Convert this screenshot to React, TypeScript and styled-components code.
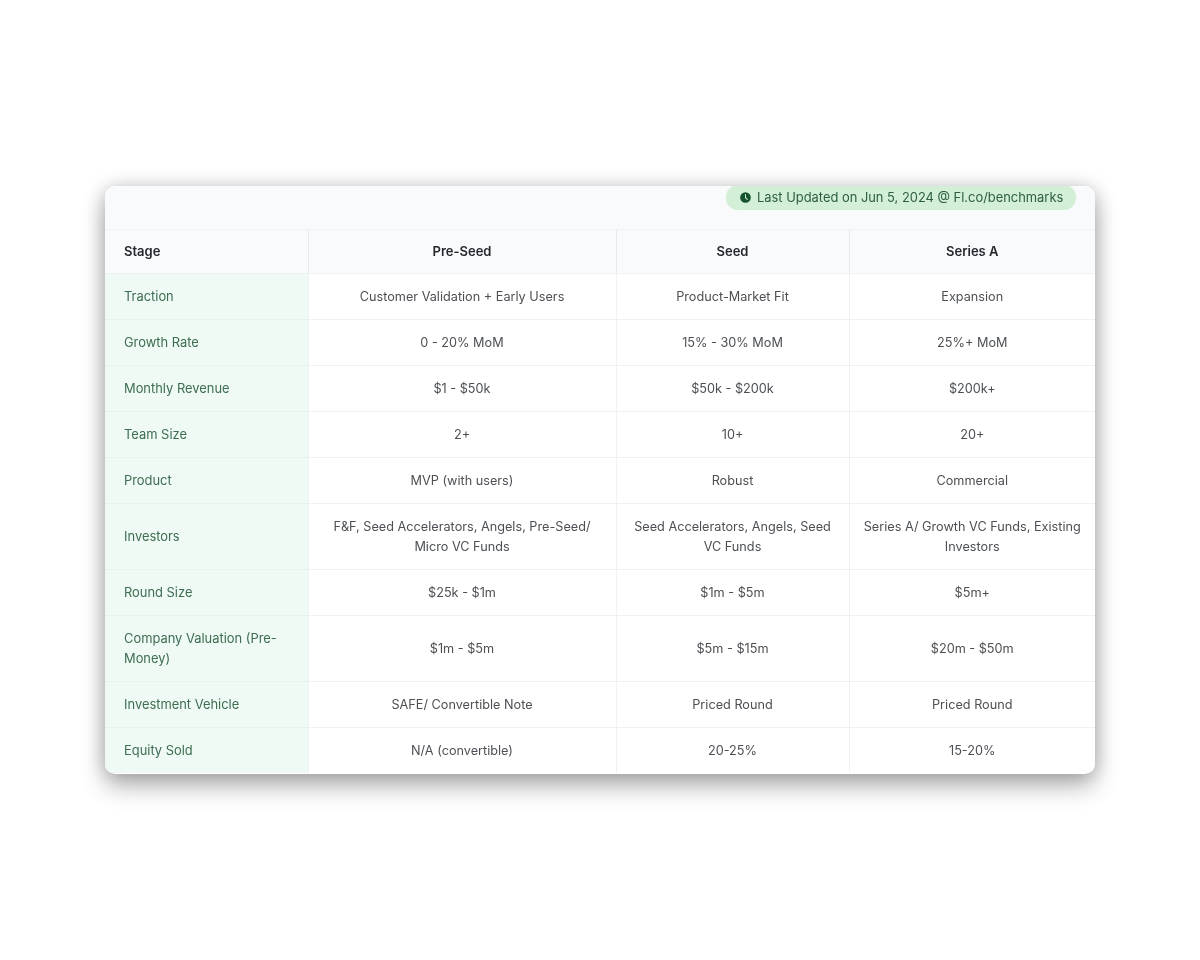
import styled, { createGlobalStyle } from "styled-components";

const GlobalStyle = createGlobalStyle`
  html, body {
    margin: 0;
    background: #ffffff;
    font-family: "Inter", "Liberation Sans", sans-serif;
  }
`;

const rows = [
  { label: "Traction", values: ["Customer Validation + Early Users", "Product-Market Fit", "Expansion"] },
  { label: "Growth Rate", values: ["0 - 20% MoM", "15% - 30% MoM", "25%+ MoM"] },
  { label: "Monthly Revenue", values: ["$1 - $50k", "$50k - $200k", "$200k+"] },
  { label: "Team Size", values: ["2+", "10+", "20+"] },
  { label: "Product", values: ["MVP (with users)", "Robust", "Commercial"] },
  {
    label: "Investors",
    tall: true,
    values: [
      "F&F, Seed Accelerators, Angels, Pre-Seed/ Micro VC Funds",
      "Seed Accelerators, Angels, Seed VC Funds",
      "Series A/ Growth VC Funds, Existing Investors",
    ],
  },
  { label: "Round Size", values: ["$25k - $1m", "$1m - $5m", "$5m+"] },
  { label: "Company Valuation (Pre-Money)", tall: true, values: ["$1m - $5m", "$5m - $15m", "$20m - $50m"] },
  { label: "Investment Vehicle", values: ["SAFE/ Convertible Note", "Priced Round", "Priced Round"] },
  { label: "Equity Sold", values: ["N/A (convertible)", "20-25%", "15-20%"] },
];

const App = () => {
  return (
    <Page>
      <GlobalStyle />
      <Card>
        <TopBand>
          <UpdatedBadge>
            <ClockIcon viewBox="0 0 12 12">
              <circle cx="6" cy="6" r="5.8" fill="#14532d" />
              <path d="M6 2.8v3.4l2 1.9" fill="none" stroke="#d3efd8" strokeWidth="1.1" strokeLinecap="round" />
            </ClockIcon>
            Last Updated on Jun 5, 2024 @ Fl.co/benchmarks
          </UpdatedBadge>
        </TopBand>
        <Table>
          <colgroup>
            <col style={{ width: 203 }} />
            <col style={{ width: 308 }} />
            <col style={{ width: 233 }} />
            <col />
          </colgroup>
          <thead>
            <tr>
              <HeadCell $first>Stage</HeadCell>
              <HeadCell>Pre-Seed</HeadCell>
              <HeadCell>Seed</HeadCell>
              <HeadCell>Series A</HeadCell>
            </tr>
          </thead>
          <tbody>
            {rows.map((row) => (
              <Row key={row.label} $tall={row.tall}>
                <LabelCell>{row.label}</LabelCell>
                {row.values.map((value, i) => (
                  <ValueCell key={i}>{value}</ValueCell>
                ))}
              </Row>
            ))}
          </tbody>
        </Table>
      </Card>
    </Page>
  );
};

const Page = styled.div`
  height: 960px;
  padding: 186px 105px 0;
  box-sizing: border-box;
  overflow: hidden;
`;

const Card = styled.div`
  width: 990px;
  height: 588px;
  background: #fff;
  border-radius: 10px;
  overflow: hidden;
  box-shadow: 0 12px 24px rgba(0, 0, 0, 0.3), 0 0 20px rgba(0, 0, 0, 0.18);
  filter: blur(0.5px);
`;

const TopBand = styled.div`
  height: 44px;
  box-sizing: border-box;
  background: #f8fafc;
  border-bottom: 1px solid #f0f2f4;
  display: flex;
  justify-content: flex-end;
  align-items: flex-start;
  padding-right: 19px;
`;

const UpdatedBadge = styled.div`
  height: 25px;
  width: 350px;
  box-sizing: border-box;
  background: #d3efd8;
  border-radius: 12px;
  margin-top: -1px;
  padding: 0 13px 0 14px;
  display: flex;
  align-items: center;
  gap: 6px;
  font-size: 12.9px;
  color: #2f5f43;
  white-space: nowrap;
`;

const ClockIcon = styled.svg`
  width: 11px;
  height: 11px;
  flex: none;
`;

const Table = styled.table`
  width: 990px;
  table-layout: fixed;
  border-collapse: collapse;
  font-size: 12.7px;
  line-height: 20px;
`;

const HeadCell = styled.th<{ $first?: boolean }>`
  height: 43px;
  box-sizing: border-box;
  padding: 0 19px;
  background: #f8fafc;
  color: #25292e;
  font-weight: 600;
  font-size: 13px;
  text-align: ${(p) => (p.$first ? "left" : "center")};
  border-bottom: 1px solid #f0f2f4;
  border-left: ${(p) => (p.$first ? "none" : "1px solid #e8eaed")};
`;

const Row = styled.tr<{ $tall?: boolean }>`
  height: ${(p) => (p.$tall ? "66px" : "46px")};
`;

const LabelCell = styled.td`
  padding: 1px 19px 0;
  background: #eefaf3;
  color: #3f6d53;
  font-size: 12.9px;
  border-bottom: 1px solid #e8f1ec;
  tr:last-child & {
    border-bottom: none;
  }
`;

const ValueCell = styled.td`
  padding: 1px 12px 0;
  text-align: center;
  color: #4c5054;
  border-bottom: 1px solid #f0f1f2;
  border-left: 1px solid #f0f1f2;
  tr:last-child & {
    border-bottom: none;
  }
`;

export default App;
